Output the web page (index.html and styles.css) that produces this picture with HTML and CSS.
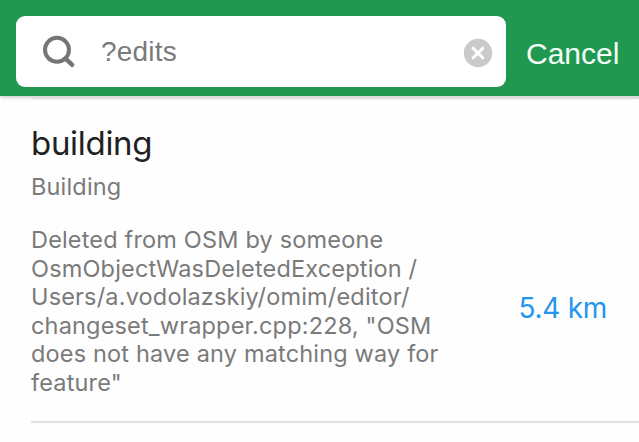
FILE: index.html
```html
<!DOCTYPE html>
<html lang="en">
<head>
    <meta charset="UTF-8">
    <meta name="viewport" content="width=device-width, initial-scale=1.0">
    <title>Search</title>
    <link rel="stylesheet" href="styles.css">
</head>
<body>
    <header class="search-bar">
        <div class="search-field">
            <svg class="search-icon" width="34" height="34" viewBox="0 0 34 34">
                <circle cx="14" cy="14.8" r="12" fill="none" stroke="#757575" stroke-width="4"/>
                <path d="M22.6 23.6L29.2 29.8" stroke="#757575" stroke-width="4.4" stroke-linecap="round"/>
            </svg>
            <span class="query">?edits</span>
            <svg class="clear-icon" width="30" height="30" viewBox="0 0 30 30">
                <circle cx="15" cy="15" r="14.2" fill="#cacaca"/>
                <path d="M10.2 10.2L19.8 19.8M19.8 10.2L10.2 19.8" stroke="#fff" stroke-width="3" stroke-linecap="round"/>
            </svg>
        </div>
        <a class="cancel">Cancel</a>
    </header>

    <main class="results">
        <div class="result">
            <div class="info">
                <h1 class="title">building</h1>
                <p class="type">Building</p>
                <p class="description">Deleted from OSM by someone<br>OsmObjectWasDeletedException /<br>Users/a.vodolazskiy/omim/editor/<br>changeset_wrapper.cpp:228, "OSM<br>does not have any matching way for<br>feature"</p>
            </div>
            <span class="distance">5.4 km</span>
        </div>
    </main>
</body>
</html>
```

FILE: styles.css
```css
body {
    margin: 0;
    height: 442px;
    overflow: hidden;
    background-color: #fefefe;
    font-family: Inter, sans-serif;
}

/* Search bar */
.search-bar {
    box-sizing: border-box;
    display: flex;
    align-items: flex-start;
    height: 96px;
    padding: 16px 0 0 16px;
    background-color: #219850;
    box-shadow: 0 1px 4px rgba(0, 0, 0, 0.25);
    font-family: "Liberation Sans", Arial, sans-serif;
}

.search-field {
    box-sizing: border-box;
    display: flex;
    align-items: center;
    width: 490px;
    height: 71px;
    padding: 0 13px 0 27px;
    border-radius: 9px;
    background-color: #fff;
}

.search-icon {
    flex: none;
    margin-top: 1px;
}

.query {
    flex: 1;
    margin-left: 24px;
    color: #7a7a7a;
    font-size: 28px;
    letter-spacing: 0.2px;
    line-height: 32px;
}

.clear-icon {
    flex: none;
    margin-top: 2px;
}

.cancel {
    margin: 21px 0 0 20px;
    color: #f5fff8;
    font-size: 30px;
    line-height: 34px;
}

/* Results list */
.results {
    margin-left: 31px;
    border-top: 3px solid #dcdcdc;
}

.result {
    box-sizing: border-box;
    display: flex;
    justify-content: space-between;
    align-items: center;
    height: 324px;
    padding: 22px 32px 0 0;
    border-bottom: 2px solid #e2e2e2;
}

.info {
    align-self: flex-start;
}

.title {
    margin: 0;
    color: #212121;
    font-size: 33px;
    font-weight: 400;
    letter-spacing: -0.3px;
    line-height: 44px;
}

.type,
.description {
    margin: 0;
    color: #7a7a7a;
    font-size: 23.5px;
    letter-spacing: 0.17px;
    line-height: 28.6px;
    white-space: nowrap;
}

.type {
    margin-top: 8px;
}

.description {
    margin-top: 24.4px;
}

.distance {
    margin-top: 74px;
    color: #2196ee;
    font-size: 28px;
    letter-spacing: -0.3px;
    line-height: 34px;
    white-space: nowrap;
}
```
